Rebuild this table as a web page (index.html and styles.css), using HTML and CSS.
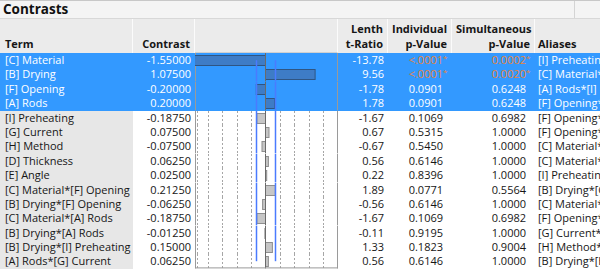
FILE: index.html
```html
<!DOCTYPE html>
<html lang="en">
<head>
    <meta charset="UTF-8">
    <meta name="viewport" content="width=device-width, initial-scale=1.0">
    <title>Contrasts</title>
    <link rel="stylesheet" href="styles.css">
</head>
<body>
    <div class="report">
        <div class="title-bar">
            <div class="title">Contrasts</div>
        </div>
        <div class="table" id="table">
            <div class="row head">
                <div class="cell left">Term</div>
                <div class="cell">Contrast</div>
                <div class="cell chart-head"></div>
                <div class="cell">Lenth<br>t-Ratio</div>
                <div class="cell">Individual<br>p-Value</div>
                <div class="cell">Simultaneous<br>p-Value</div>
                <div class="cell left alias-head">Aliases</div>
            </div>
        </div>
    </div>

    <script>
        // term, contrast, lenth t, individual p, simultaneous p, aliases, selected
        const data = [
            ['[C] Material', -1.55, '-13.78', '<.0001*', '0.0002*', '[I] Preheating*[E] Angle', 1],
            ['[B] Drying', 1.075, '9.56', '<.0001*', '0.0020*', '[C] Material*[H] Method', 1],
            ['[F] Opening', -0.2, '-1.78', '0.0901', '0.6248', '[A] Rods*[I] Preheating', 1],
            ['[A] Rods', 0.2, '1.78', '0.0901', '0.6248', '[F] Opening*[I] Preheating', 1],
            ['[I] Preheating', -0.1875, '-1.67', '0.1069', '0.6982', '[F] Opening*[A] Rods', 0],
            ['[G] Current', 0.075, '0.67', '0.5315', '1.0000', '[F] Opening*[E] Angle', 0],
            ['[H] Method', -0.075, '-0.67', '0.5450', '1.0000', '[C] Material*[B] Drying', 0],
            ['[D] Thickness', 0.0625, '0.56', '0.6146', '1.0000', '[C] Material*[G] Current', 0],
            ['[E] Angle', 0.025, '0.22', '0.8396', '1.0000', '[I] Preheating*[C] Material', 0],
            ['[C] Material*[F] Opening', 0.2125, '1.89', '0.0771', '0.5564', '[B] Drying*[G] Current', 0],
            ['[B] Drying*[F] Opening', -0.0625, '-0.56', '0.6146', '1.0000', '[C] Material*[D] Thickness', 0],
            ['[C] Material*[A] Rods', -0.1875, '-1.67', '0.1069', '0.6982', '[F] Opening*[I] Preheating', 0],
            ['[B] Drying*[A] Rods', -0.0125, '-0.11', '0.9195', '1.0000', '[G] Current*[H] Method', 0],
            ['[B] Drying*[I] Preheating', 0.15, '1.33', '0.1823', '0.9004', '[H] Method*[D] Thickness', 0],
            ['[A] Rods*[G] Current', 0.0625, '0.56', '0.6146', '1.0000', '[B] Drying*[H] Method', 0]
        ];

        const W = 143, H = 14.4, Z = 70.5, SCALE = 71.5 / 1.55;
        const grid = [2.5, 13.5, 27.5, 42.5, 56.5, 85.5, 99.5, 114.5, 128.5];

        function pval(v) {
            if (v.endsWith('*')) {
                return '<span class="signif">' + v.slice(0, -1) + '<span class="star">*</span></span>';
            }
            return v + '<span class="star"></span>';
        }

        function chart(c, sel, i, last) {
            let s = '<svg width="' + W + '" height="' + H + '">';
            if (!sel) {
                grid.forEach(x => {
                    s += '<line x1="' + x + '" y1="0" x2="' + x + '" y2="' + H + '" class="dots"/>';
                });
            }
            s += '<line x1="0.5" y1="0" x2="0.5" y2="' + H + '" class="box"/>';
            s += '<line x1="142.5" y1="0" x2="142.5" y2="' + H + '" class="box"/>';
            let x = c < 0 ? Z + c * SCALE : Z;
            let w = Math.abs(c) * SCALE;
            s += '<rect x="' + x.toFixed(1) + '" y="2.5" width="' + w.toFixed(1) + '" height="10" class="' + (sel ? 'bar-sel' : 'bar') + '"/>';
            s += '<line x1="' + Z + '" y1="0" x2="' + Z + '" y2="' + H + '" class="zero"/>';
            let y1 = i === 0 ? H / 2 : 0;
            let y2 = last ? H / 2 : H;
            [Z - 9, Z + 10].forEach(mx => {
                s += '<line x1="' + mx + '" y1="' + y1 + '" x2="' + mx + '" y2="' + y2 + '" class="me"/>';
            });
            if (last) {
                s += '<line x1="0" y1="' + (H - 0.5) + '" x2="' + W + '" y2="' + (H - 0.5) + '" class="box"/>';
            }
            return s + '</svg>';
        }

        let table = document.getElementById('table');
        data.forEach((d, i) => {
            let row = document.createElement('div');
            row.className = 'row body' + (d[6] ? ' sel' : '');
            row.innerHTML =
                '<div class="cell term">' + d[0] + '</div>' +
                '<div class="cell">' + d[1].toFixed(5) + '</div>' +
                '<div class="cell chart">' + chart(d[1], d[6], i, i === data.length - 1) + '</div>' +
                '<div class="cell">' + d[2] + '</div>' +
                '<div class="cell pv">' + pval(d[3]) + '</div>' +
                '<div class="cell pv">' + pval(d[4]) + '</div>' +
                '<div class="cell alias">' + d[5] + '</div>';
            table.appendChild(row);
        });
    </script>
</body>
</html>
```

FILE: styles.css
```css
body {
    margin: 0;
    padding: 0;
    background: white;
}

.report {
    width: 600px;
    font-family: "Open Sans", "Noto Sans", sans-serif;
    font-size: 11px;
    color: #161616;
    overflow: hidden;
}

.title-bar {
    border-top: 1px solid #c8c8c8;
    border-bottom: 1px solid #d8d8d8;
    background: #f4f4f4;
}
.title {
    width: 571px;
    height: 17px;
    padding-left: 3px;
    border-right: 1px solid #d4d4d4;
    font-size: 13.5px;
    font-weight: bold;
    line-height: 17px;
    color: #111;
}

.table {
    display: flex;
    flex-direction: column;
}
.row {
    display: grid;
    grid-template-columns: 133px 62px 143px 50px 64px 83px 65px;
}
.cell {
    box-sizing: border-box;
    padding: 0 4px;
    text-align: right;
    white-space: nowrap;
}

/* header */
.head {
    height: 34px;
    background: #ebebeb;
}
.head .cell {
    display: flex;
    flex-direction: column;
    justify-content: flex-end;
    padding-bottom: 2px;
    font-weight: bold;
    line-height: 15px;
    border-right: 1px solid #fbfbfb;
}
.head .left {
    text-align: left;
    padding-left: 5px;
}
.head .alias-head {
    padding-left: 3px;
    border-right: none;
}
.head .chart-head {
    border-bottom: 1px solid #d0d0d0;
}

/* body rows */
.body {
    height: 14.4px;
    line-height: 14.4px;
}
.body .term {
    text-align: left;
    padding-left: 5px;
    background: #e7e7e7;
    overflow: hidden;
}
.body .chart {
    padding: 0;
    line-height: 0;
}
.body .chart svg {
    display: block;
}
.body .pv {
    padding-right: 3px;
}
.body .alias {
    text-align: left;
    padding-left: 3px;
    padding-right: 0;
    overflow: hidden;
}
.star {
    display: inline-block;
    width: 6px;
    font-size: 8px;
    line-height: 0;
    vertical-align: 3px;
    text-align: left;
}
.signif {
    color: #e6843c;
}

.sel,
.sel .term {
    background: #3399ff;
    color: white;
}

/* chart strokes */
.dots {
    stroke: #a6a6a6;
    stroke-width: 1;
    stroke-dasharray: 2 2;
}
.box {
    stroke: #9a9a9a;
    stroke-width: 1;
}
.zero {
    stroke: #6a6a6a;
    stroke-width: 1;
}
.me {
    stroke: #4a7bff;
    stroke-width: 1.5;
}
.bar {
    fill: #c6c6c6;
    stroke: #8e8e8e;
    stroke-width: 1;
}
.bar-sel {
    fill: #3e7cc6;
    stroke: #2f5583;
    stroke-width: 1;
}
```
